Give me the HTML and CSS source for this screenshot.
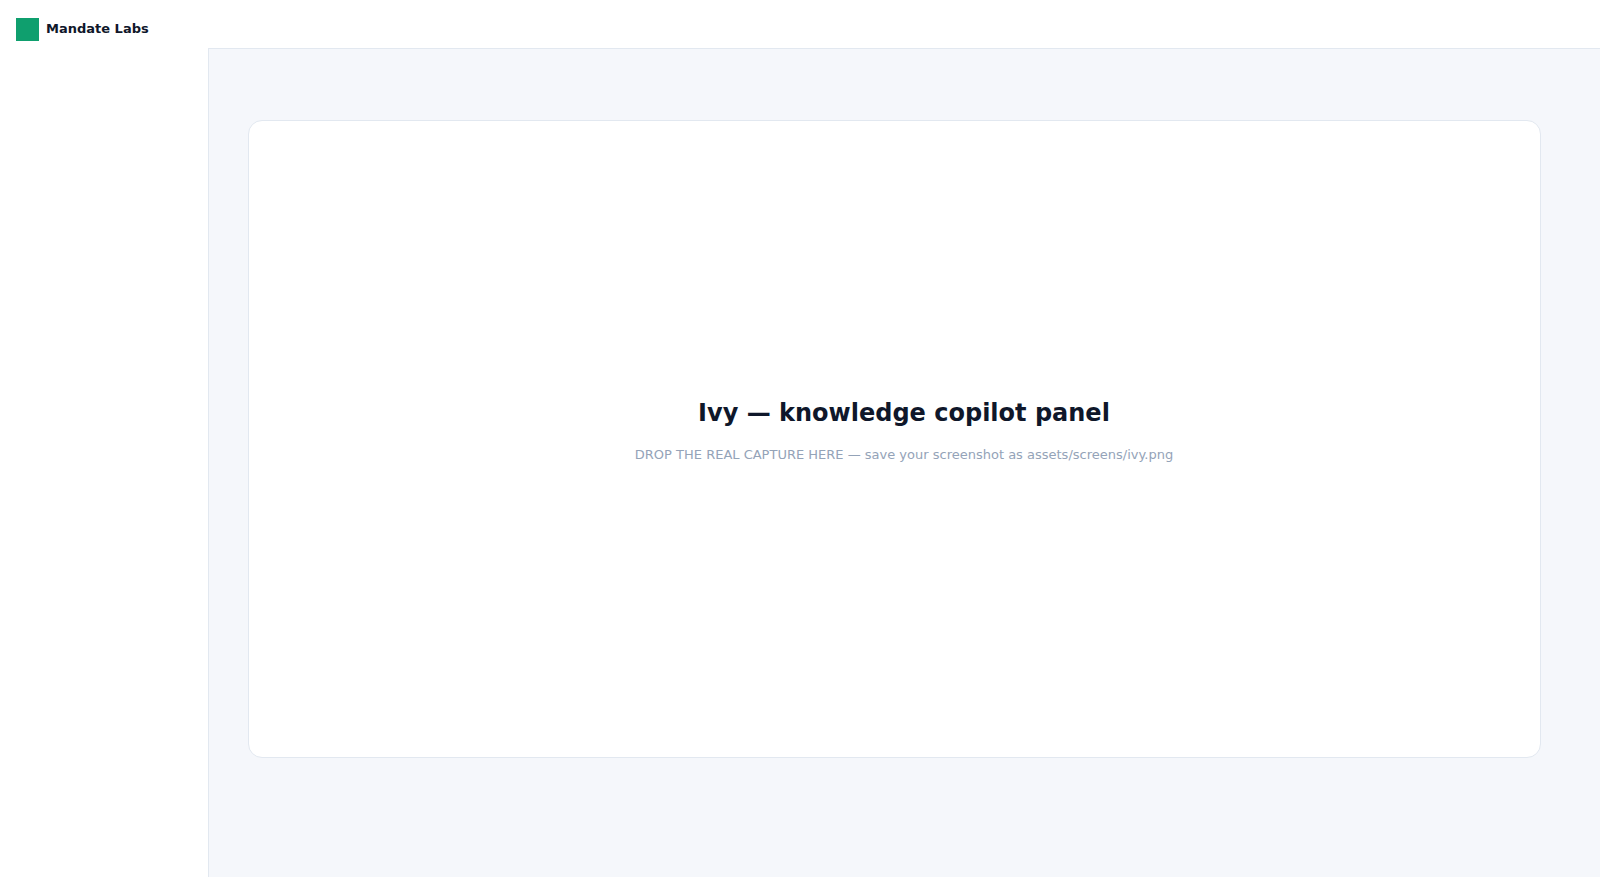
FILE: index.html
```html
<!DOCTYPE html>
<html lang="en">
<head>
  <meta charset="UTF-8">
  <meta name="viewport" content="width=device-width, initial-scale=1.0">
  <title>Mandate Labs</title>
  <link rel="stylesheet" href="styles.css">
</head>
<body>
  <header class="header">
    <span class="logo"></span>
    <span class="brand">Mandate Labs</span>
  </header>
  <div class="layout">
    <aside class="sidebar"></aside>
    <main class="content">
      <section class="panel">
        <h1>Ivy — knowledge copilot panel</h1>
        <p>DROP THE REAL CAPTURE HERE — save your screenshot as assets/screens/ivy.png</p>
      </section>
    </main>
  </div>
</body>
</html>
```

FILE: styles.css
```css
* {
  box-sizing: border-box;
}

body {
  margin: 0;
  min-height: 100vh;
  display: flex;
  flex-direction: column;
  background-color: #ffffff;
  color: #0f172a;
  font-family: "DejaVu Sans", sans-serif;
}

.header {
  height: 48px;
  padding: 18px 16px 0;
  display: flex;
  align-items: flex-start;
  gap: 7px;
}

.logo {
  width: 23px;
  height: 23px;
  background-color: #0f9f6e;
}

.brand {
  font-size: 13px;
  line-height: 21px;
  font-weight: bold;
}

.layout {
  flex: 1;
  display: flex;
}

.sidebar {
  width: 208px;
}

.content {
  flex: 1;
  display: flex;
  padding: 71px 59px 119px 39px;
  border-top: 1px solid #e2e8f0;
  border-left: 1px solid #e2e8f0;
  background-color: #f5f7fb;
}

.panel {
  flex: 1;
  display: flex;
  flex-direction: column;
  align-items: center;
  justify-content: center;
  padding: 0 0 17px 19px;
  border: 1px solid #e2e8f0;
  border-radius: 14px;
  background-color: #ffffff;
}

.panel h1 {
  margin: 0 0 20px;
  font-size: 24px;
}

.panel p {
  margin: 0;
  font-size: 13px;
  color: #94a3b8;
}
```
